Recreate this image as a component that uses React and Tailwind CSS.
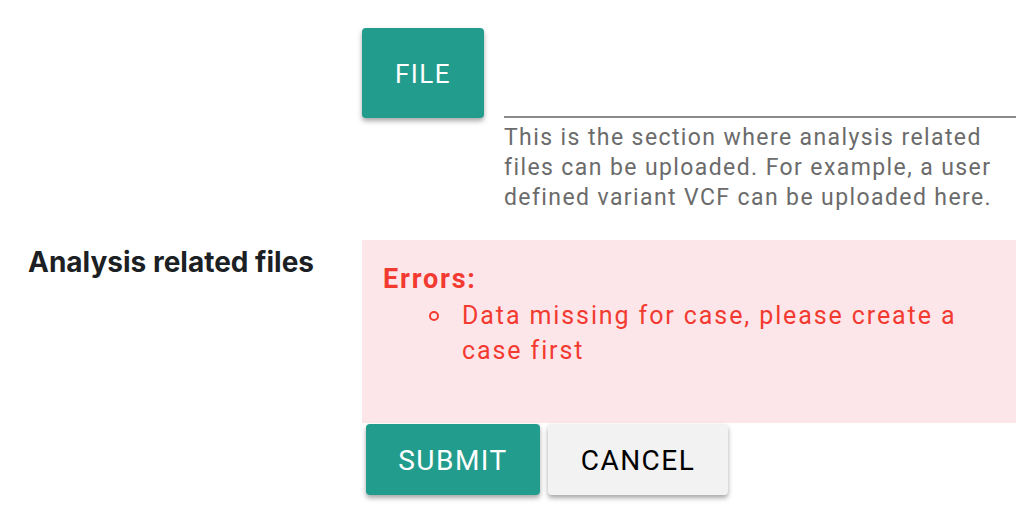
export default function App() {
  return (
    <div className="w-[1030px] h-[520px] bg-white overflow-hidden" style={{ fontFamily: "Roboto, 'Liberation Sans', sans-serif" }}>
      <div className="pt-[28px] pl-[362px] flex">
        <button className="w-[122px] h-[90px] pt-[2px] rounded-[4px] bg-[#229c8c] text-white text-[26px] tracking-[1.5px] shadow-[0_3px_5px_rgba(0,0,0,0.35)]">
          FILE
        </button>
        <div className="ml-[20px] w-[512px] flex flex-col">
          <div className="h-[90px] border-b-2 border-[#8a8a8a]"></div>
          <p className="mt-[5px] text-[23px] leading-[30px] tracking-[1.4px] text-[#6b6b6b]">
            This is the section where analysis related files can be uploaded. For example, a user defined variant VCF can be uploaded here.
          </p>
        </div>
      </div>
      <div className="mt-[27px] flex">
        <div className="w-[362px] pl-[28px] pt-[7px]">
          <div className="text-[28px] leading-[30px] font-bold text-[#1c1f23]" style={{ fontFamily: "Inter, 'Liberation Sans', sans-serif" }}>
            Analysis related files
          </div>
        </div>
        <div className="w-[654px] flex flex-col">
          <div className="h-[183px] bg-[#fde6e9] pl-[21px] pt-[24px] text-[#f23a31]">
            <div className="text-[27px] leading-[30px] font-bold tracking-[1.8px]">Errors:</div>
            <div className="mt-[4px] flex pl-[46px]">
              <span className="mt-[13px] w-[10px] h-[10px] rounded-full border-[2px] border-[#f23a31] shrink-0"></span>
              <span className="ml-[23px] text-[25px] leading-[35px] tracking-[1.9px] w-[525px]">
                Data missing for case, please create a case first
              </span>
            </div>
          </div>
          <div className="pl-[4px] pt-[1px] flex gap-[8px]">
            <button className="w-[174px] h-[71px] pt-[3px] rounded-[4px] bg-[#229c8c] text-white text-[28px] tracking-[1.5px] shadow-[0_3px_5px_rgba(0,0,0,0.35)]">
              SUBMIT
            </button>
            <button className="w-[180px] h-[71px] pt-[3px] rounded-[4px] bg-[#f2f2f2] text-black text-[28px] tracking-[1.5px] shadow-[0_3px_5px_rgba(0,0,0,0.35)]">
              CANCEL
            </button>
          </div>
        </div>
      </div>
    </div>
  );
}
